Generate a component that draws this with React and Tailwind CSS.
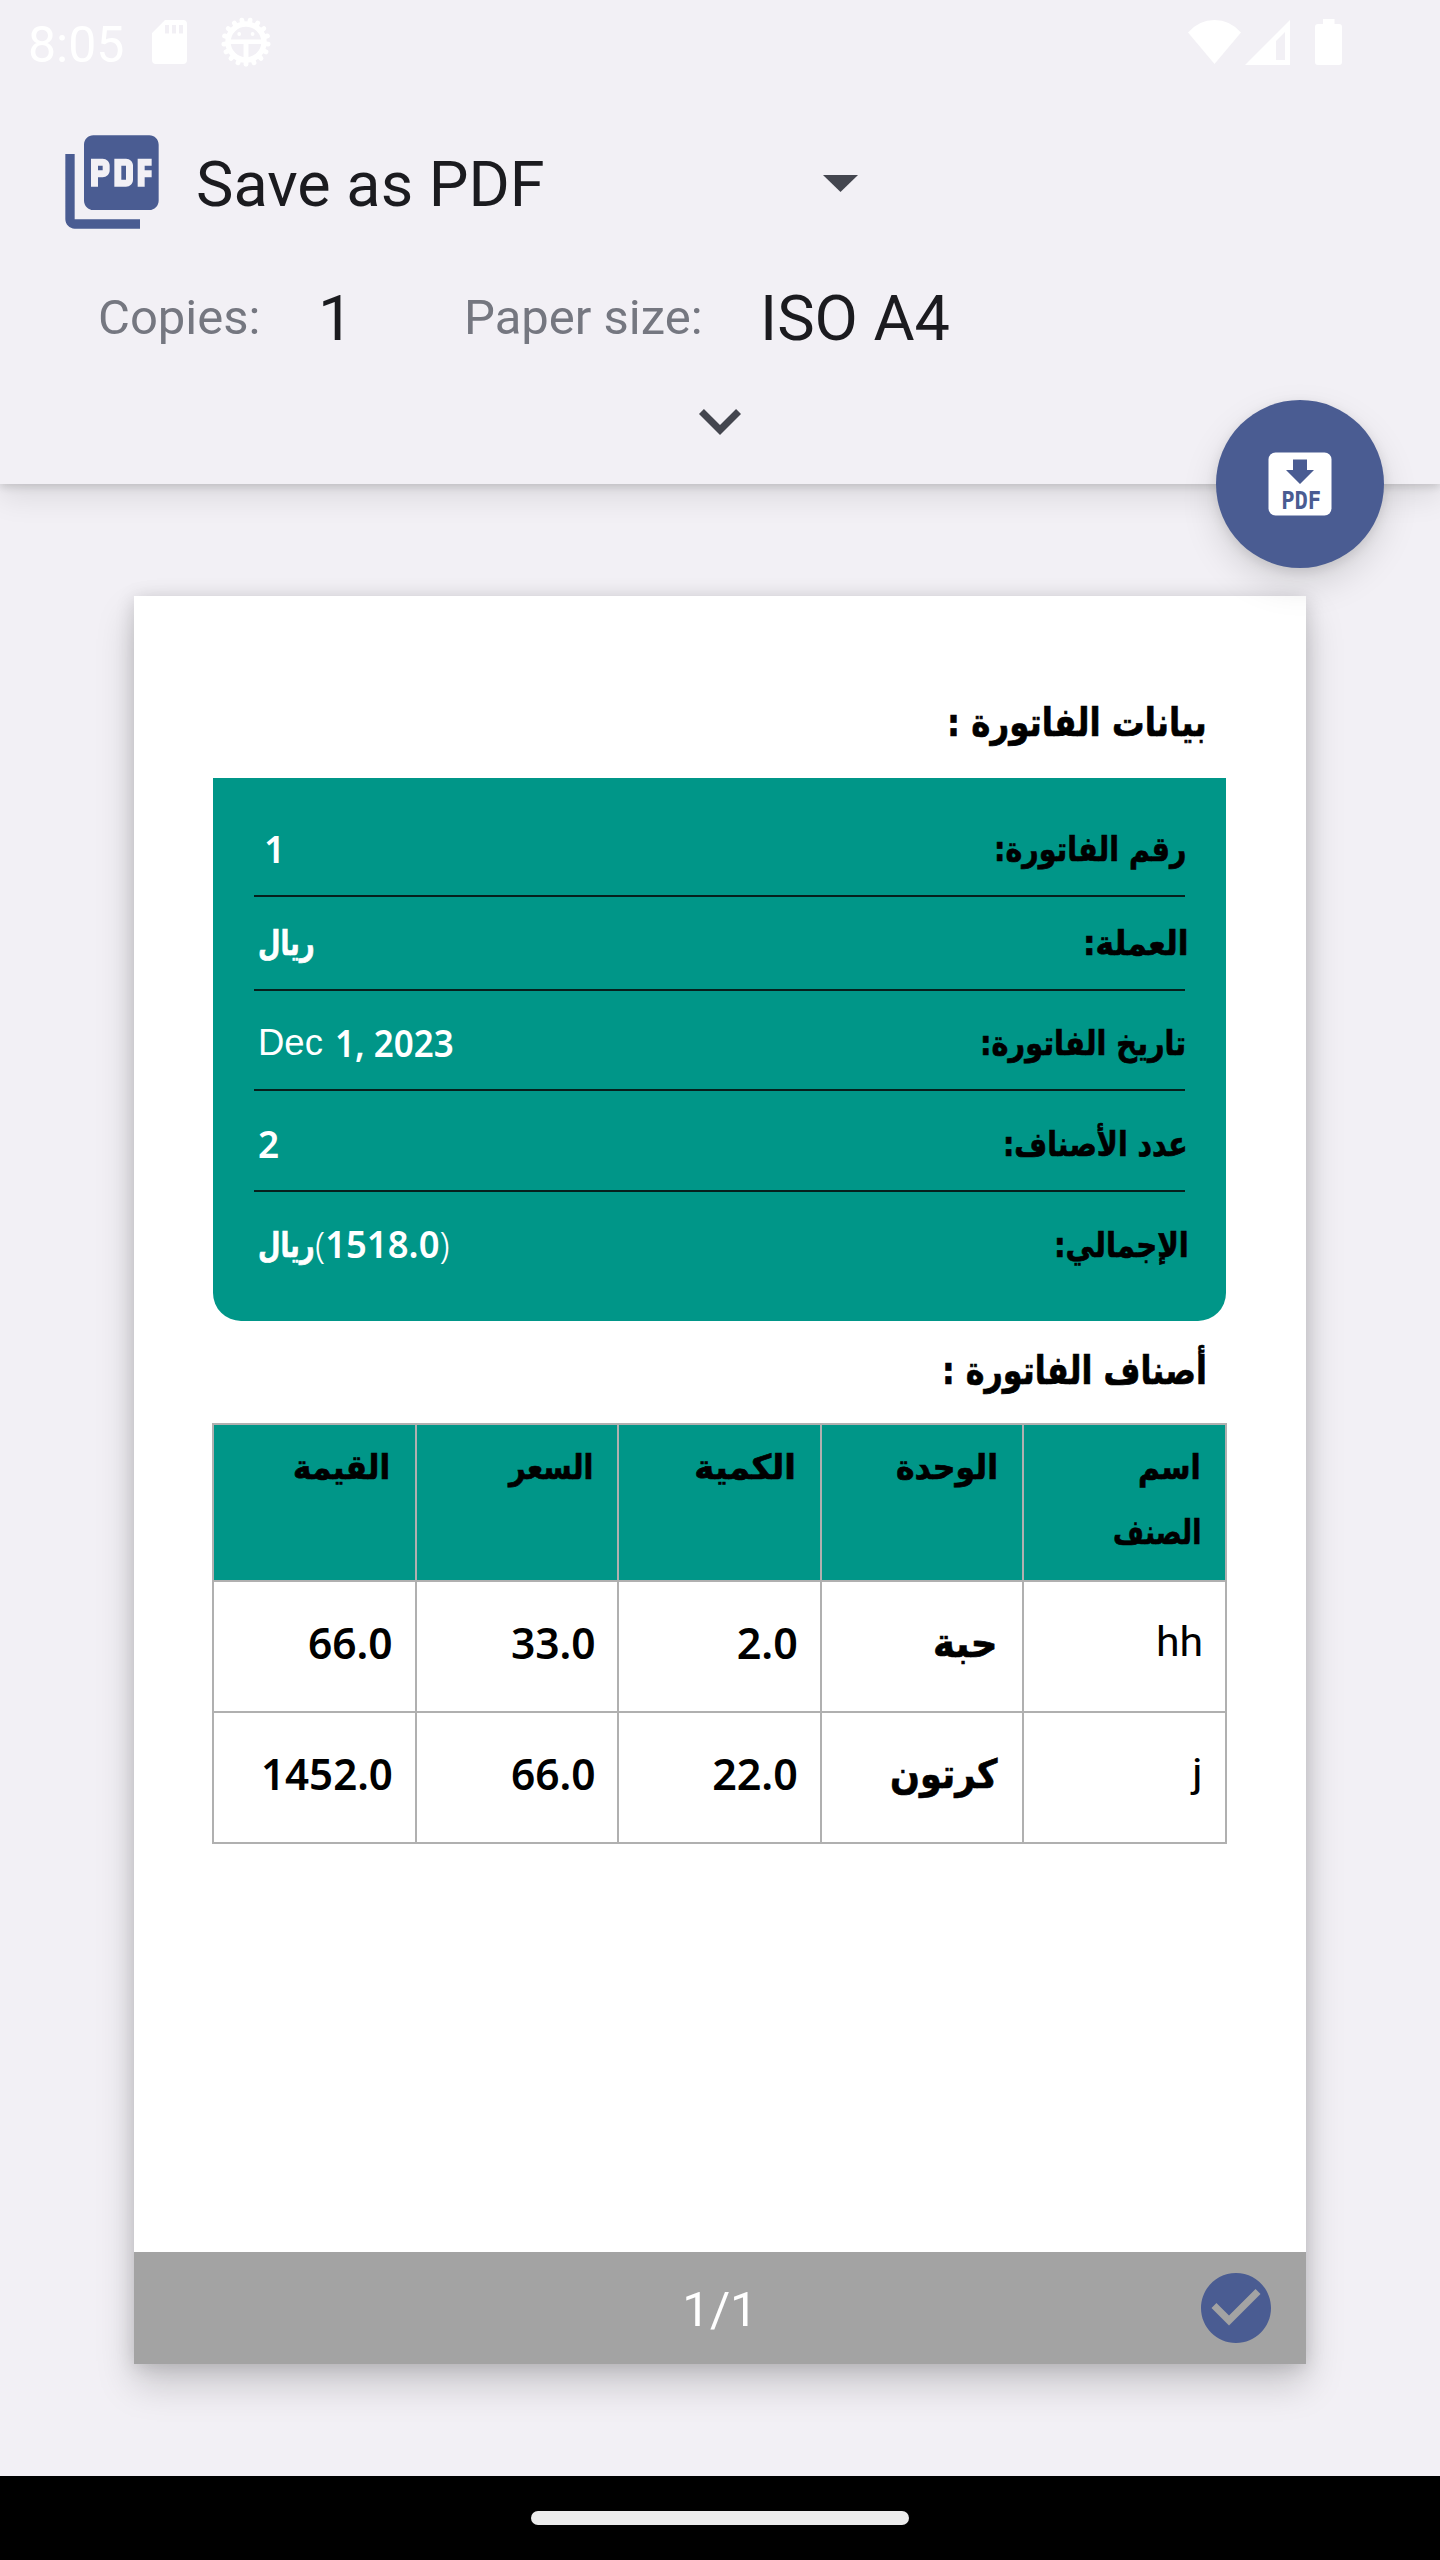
import { useLayoutEffect, useRef, useState } from "react";
import { MdPictureAsPdf, MdExpandMore, MdCheckCircle } from "react-icons/md";

// Stretches or squeezes a run of text horizontally to the given width.
function Fit({ w, className = "", right = false, children }) {
  const ref = useRef(null);
  const [box, setBox] = useState({ k: 1, margin: 0 });
  useLayoutEffect(() => {
    const natural = ref.current.offsetWidth;
    setBox({ k: w / natural, margin: w - natural });
  }, [w]);
  return (
    <span
      ref={ref}
      className={`inline-block shrink-0 whitespace-nowrap ${right ? "origin-right" : "origin-left"} ${className}`}
      style={{ transform: `scaleX(${box.k})`, marginRight: right ? undefined : box.margin }}
    >
      {children}
    </span>
  );
}

const AR = "font-['DejaVu_Sans'] font-bold [-webkit-text-stroke:0.7px_currentColor]";
const NUM = "font-['Noto_Sans'] font-semibold";

const TEETH = Array.from({ length: 17 }, (_, i) => (i * 360) / 17);

function DebugIcon() {
  return (
    <svg className="h-[50px] w-[50px]" viewBox="-25 -25 50 50" fill="none" stroke="#fff">
      <circle r="18" strokeWidth="5.400" />
      {TEETH.map((a) => (
        <path key={a} d="M0 18V22.300" strokeWidth="4.800" strokeLinecap="round" transform={`rotate(${a})`} />
      ))}
      <path d="M-17-.3H17" strokeWidth="4.600" />
      <path d="M0 0V18" strokeWidth="5" />
      <circle cx="-6.800" cy="-8" r="1.900" fill="#fff" stroke="none" />
      <circle cx="6.600" cy="-8" r="1.900" fill="#fff" stroke="none" />
    </svg>
  );
}

function StatusBar() {
  return (
    <div className="flex h-[88px] items-center pl-[28px] text-white">
      <span className="w-[124px] pt-px text-[50px] leading-none">8:05</span>
      <svg className="-mt-[4px] h-[44px] w-[35px]" viewBox="0 0 35 44">
        <path
          fillRule="evenodd"
          fill="#fff"
          d="M13 0H31a4 4 0 0 1 4 4V40a4 4 0 0 1-4 4H4a4 4 0 0 1-4-4V13ZM13 5V13.600H17V5ZM20 5V13.600H24V5ZM27 5V13.600H31V5Z"
        />
      </svg>
      <div className="-mt-[4px] ml-[34px]">
        <DebugIcon />
      </div>
      <svg className="-mt-[4px] ml-[917px] h-[44px] w-[53px]" viewBox="0 0 53 44">
        <path fill="#fff" d="M0 12.500Q11 0 26.500 0Q42 0 53 12.500L26.500 44Z" />
      </svg>
      <svg className="-mt-[4px] ml-[4px] h-[45px] w-[45px]" viewBox="0 0 45 45">
        <path fill="#fff" fillRule="evenodd" d="M45 0V45H0ZM40 12L31 21V40H40Z" />
      </svg>
      <svg className="-mt-[4px] ml-[25px] h-[46px] w-[27px]" viewBox="0 0 27 46">
        <path fill="#fff" d="M8 0H19.500V5H24a3 3 0 0 1 3 3V43a3 3 0 0 1-3 3H3a3 3 0 0 1-3-3V8a3 3 0 0 1 3-3H8Z" />
      </svg>
    </div>
  );
}

function PrintOptions() {
  return (
    <header className="relative z-10 h-[484px] bg-[#f2f0f5] shadow-[0_14px_28px_rgba(0,0,0,0.09),0_3px_8px_rgba(0,0,0,0.14)]">
      <StatusBar />
      <div className="flex h-[188px] items-center pl-[56px]">
        <MdPictureAsPdf className="h-[112px] w-[112px] text-[#4a5c92]" />
        <span className="ml-[28px] mt-[5px] w-[627px] text-[63px] leading-none text-[#1b1b1f]">Save as PDF</span>
        <svg className="mt-[3px] h-[17px] w-[35px]" viewBox="0 0 35 17">
          <path fill="#44464f" d="M0 0H35L17.500 17Z" />
        </svg>
      </div>
      <div className="flex h-[84px] items-center pb-[2px] pl-[98px] leading-none">
        <span className="w-[220px] text-[49px] text-[#757780]">Copies:</span>
        <span className="w-[146px] pt-[2px] text-[63px] text-[#1b1b1f]">1</span>
        <span className="w-[296px] text-[49px] text-[#757780]">Paper size:</span>
        <span className="pt-[2px] text-[63px] text-[#1b1b1f]">ISO A4</span>
      </div>
      <MdExpandMore className="mx-auto mt-[19px] h-[84px] w-[84px] text-[#44464f]" />
      <button className="absolute right-[56px] top-[400px] flex h-[168px] w-[168px] items-center justify-center rounded-full bg-[#4a5c92] shadow-[0_16px_36px_rgba(0,0,0,0.13),0_4px_12px_rgba(0,0,0,0.1)]">
        <svg className="h-[84px] w-[84px]" viewBox="0 0 84 84">
          <rect x="10.500" y="10.500" width="63" height="63" rx="7" fill="#fff" />
          <path fill="#4a5c92" d="M35 17.500H49V28H56L42 42L28 28H35Z" />
          <text
            x="23.200"
            y="66.500"
            fill="#4a5c92"
            fontFamily="'DejaVu Sans Mono', monospace"
            fontWeight="700"
            fontSize="24"
            textLength="40"
            lengthAdjust="spacingAndGlyphs"
          >
            PDF
          </text>
        </svg>
      </button>
    </header>
  );
}

function InfoRow({ label, w, value, className, nudge = "" }) {
  return (
    <div className={`flex items-center justify-between border-[#06201d] ${className}`}>
      <Fit w={w} right className={`${AR} ${nudge} text-[34px] leading-none text-black`}>
        {label}
      </Fit>
      <div dir="ltr" className="flex items-center pl-[4px] text-white">
        {value}
      </div>
    </div>
  );
}

function InvoiceInfo() {
  return (
    <section className="h-[543px] rounded-b-[28px] bg-[#009688] px-[41px] pt-[24px]">
      <InfoRow
        className="h-[95px] border-b-2"
        nudge="-mr-px"
        label="رقم الفاتورة:"
        w={192}
        value={<span className={`${NUM} pl-[6px] text-[37px] leading-none`}>1</span>}
      />
      <InfoRow
        className="h-[94px] border-b-2"
        nudge="-mr-[4px]"
        label="العملة:"
        w={106}
        value={<Fit w={57} className={`${AR} text-[34px] leading-none`}>ريال</Fit>}
      />
      <InfoRow
        className="h-[100px] border-b-2 pt-[6px]"
        nudge="-mr-px"
        label="تاريخ الفاتورة:"
        w={206}
        value={
          <>
            <span className="w-[77px] font-['Liberation_Sans'] text-[36.500px] leading-none">Dec</span>
            <Fit w={119} className={`${NUM} -mt-[2px] text-[37px] leading-none`}>1, 2023</Fit>
          </>
        }
      />
      <InfoRow
        className="h-[101px] border-b-2 pt-[6px]"
        nudge="-mr-[3px]"
        label="عدد الأصناف:"
        w={185}
        value={<span className={`${NUM} text-[37px] leading-none`}>2</span>}
      />
      <InfoRow
        className="h-[99px] pt-[6px]"
        nudge="-mr-[4px]"
        label="الإجمالي:"
        w={135}
        value={
          <>
            <Fit w={57} className={`${AR} text-[34px] leading-none`}>ريال</Fit>
            <Fit w={135} className={`${NUM} -mt-[2px] text-[37px] leading-none`}>
              <span className="font-light">(</span>1518.0<span className="font-light">)</span>
            </Fit>
          </>
        }
      />
    </section>
  );
}

function HeadCell({ lines }) {
  return (
    <div className="flex flex-col items-start bg-[#009688] pr-[24px] pt-[10px]">
      {lines.map(([text, w]) => (
        <Fit key={text} w={w} right className={`${AR} text-[34px] leading-[65px] text-black`}>
          {text}
        </Fit>
      ))}
    </div>
  );
}

function Cell({ text, w, kind }) {
  const styles = {
    num: `${NUM} text-[43px]`,
    ar: `${AR} text-[40px] mr-[3px]`,
    latin: "font-['Roboto'] text-[41px]",
  };
  return (
    <div className="flex items-center bg-white pb-[8px] pr-[22px]">
      <Fit w={w} right className={`${styles[kind]} leading-none text-black`}>
        {text}
      </Fit>
    </div>
  );
}

function ItemsTable() {
  return (
    <section className="-mr-px grid w-[1015px] grid-cols-5 grid-rows-[155px_129px_129px] gap-[2px] bg-[#b0b0b0] p-[2px]">
      <HeadCell lines={[["اسم", 63], ["الصنف", 88]]} />
      <HeadCell lines={[["الوحدة", 102]]} />
      <HeadCell lines={[["الكمية", 102]]} />
      <HeadCell lines={[["السعر", 84]]} />
      <HeadCell lines={[["القيمة", 97]]} />
      <Cell kind="latin" text="hh" w={47} />
      <Cell kind="ar" text="حبة" w={64} />
      <Cell kind="num" text="2.0" w={61} />
      <Cell kind="num" text="33.0" w={85} />
      <Cell kind="num" text="66.0" w={85} />
      <Cell kind="latin" text="j" w={11} />
      <Cell kind="ar" text="كرتون" w={107} />
      <Cell kind="num" text="22.0" w={86} />
      <Cell kind="num" text="66.0" w={85} />
      <Cell kind="num" text="1452.0" w={132} />
    </section>
  );
}

function Heading({ children, w, className }) {
  return (
    <h2 className={`flex items-center pr-[19px] ${className}`}>
      <Fit w={w} right className={`${AR} text-[39px] leading-none text-black`}>
        {children}
      </Fit>
    </h2>
  );
}

function PagePreview() {
  return (
    <main className="mx-auto mt-[112px] flex h-[1768px] w-[1172px] flex-col bg-white shadow-[0_20px_36px_rgba(0,0,0,0.18),0_2px_18px_rgba(0,0,0,0.14)]">
      <div dir="rtl" className="flex-1 pl-[79px] pr-[80px]">
        <Heading className="h-[182px] pt-[71px]" w={260}>
          بيانات الفاتورة :
        </Heading>
        <InvoiceInfo />
        <Heading className="h-[102px] pb-[4px]" w={265}>
          أصناف الفاتورة :
        </Heading>
        <ItemsTable />
      </div>
      <footer className="relative flex h-[112px] items-center justify-center bg-[#a3a3a3]">
        <span className="pt-[3px] text-[49px] leading-none text-white">1/1</span>
        <MdCheckCircle className="absolute right-[28px] top-[14px] h-[84px] w-[84px] text-[#4a5c92]" />
      </footer>
    </main>
  );
}

export default function App() {
  return (
    <div className="flex h-[2560px] w-[1440px] flex-col overflow-hidden bg-[#f2f0f5] font-['Roboto',sans-serif]">
      <PrintOptions />
      <PagePreview />
      <nav className="mt-auto flex h-[84px] items-center justify-center bg-black">
        <div className="h-[14px] w-[378px] rounded-full bg-[#ececec]" />
      </nav>
    </div>
  );
}
